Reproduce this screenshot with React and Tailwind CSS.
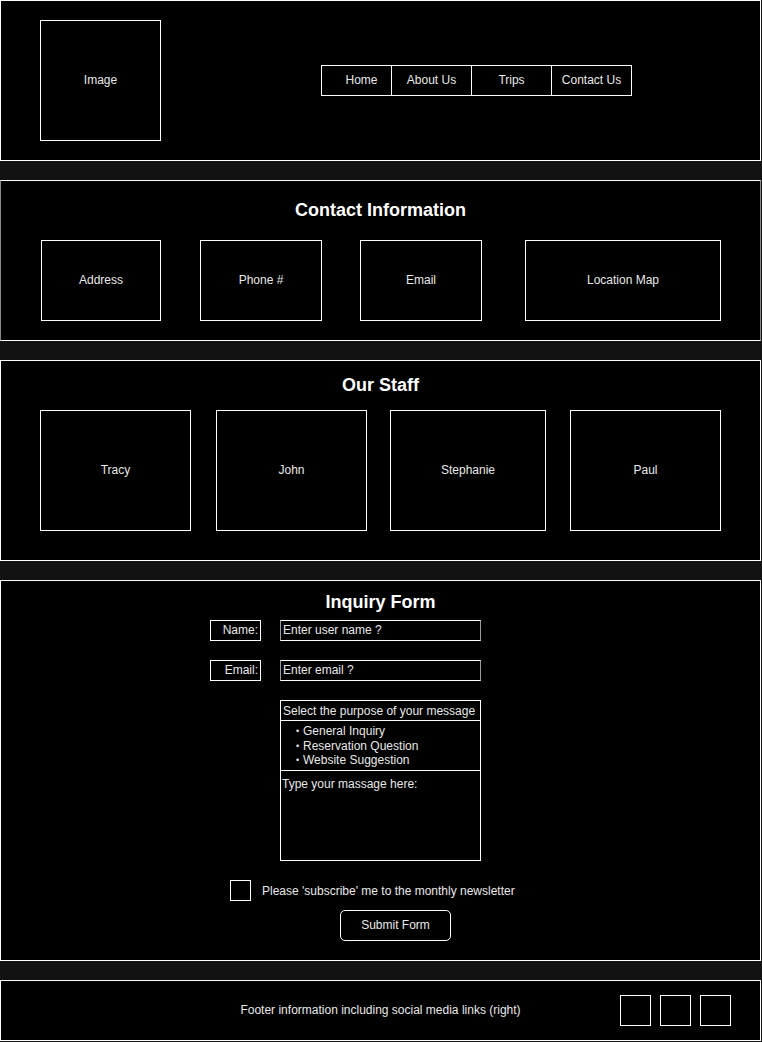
import React from 'react';

const font = { fontFamily: '"Liberation Sans", Arial, sans-serif' };

const Box = ({ className = '', children }) => (
  <div className={`border border-white flex items-center justify-center pb-[1px] text-[12px] text-[#e8e8e8] shrink-0 ${className}`}>
    {children}
  </div>
);

const App = () => {
  const navItems = [
    { label: 'Home', cls: 'w-[69px] pl-[10px]' },
    { label: 'About Us', cls: 'w-[80px] border-l border-white' },
    { label: 'Trips', cls: 'w-[80px] border-l border-white' },
    { label: 'Contact Us', cls: 'w-[80px] border-l border-white' },
  ];

  return (
    <div className="min-h-screen bg-[#121212] flex flex-col gap-[19px] text-white" style={font}>
      {/* Header */}
      <header className="w-[761px] h-[161px] border border-white bg-black flex items-center pl-[39px]">
        <Box className="w-[121px] h-[121px]">Image</Box>
        <nav className="ml-[160px] flex h-[31px] border border-white">
          {navItems.map((n) => (
            <div key={n.label} className={`flex items-center justify-center pb-[1px] text-[12px] text-[#e8e8e8] ${n.cls}`}>
              {n.label}
            </div>
          ))}
        </nav>
      </header>

      {/* Contact Information */}
      <section className="w-[761px] h-[161px] border border-white border-x-[#8a8a8a] bg-black pt-[17px]">
        <h2 className="text-center text-[18px] leading-[24px] font-bold">Contact Information</h2>
        <div className="flex mt-[18px]">
          <Box className="ml-[40px] w-[120px] h-[81px]">Address</Box>
          <Box className="ml-[39px] w-[122px] h-[81px]">Phone #</Box>
          <Box className="ml-[38px] w-[122px] h-[81px]">Email</Box>
          <Box className="ml-[43px] w-[196px] h-[81px]">Location Map</Box>
        </div>
      </section>

      {/* Our Staff */}
      <section className="w-[761px] h-[201px] border border-white bg-black pt-[12px]">
        <h2 className="text-center text-[18px] leading-[24px] font-bold">Our Staff</h2>
        <div className="flex mt-[13px]">
          <Box className="ml-[39px] w-[151px] h-[121px]">Tracy</Box>
          <Box className="ml-[25px] w-[151px] h-[121px]">John</Box>
          <Box className="ml-[23px] w-[156px] h-[121px]">Stephanie</Box>
          <Box className="ml-[24px] w-[151px] h-[121px]">Paul</Box>
        </div>
      </section>

      {/* Inquiry Form */}
      <section className="w-[761px] h-[381px] border border-white bg-black pt-[9px] text-[12px] text-[#e8e8e8]">
        <h2 className="text-center text-[18px] leading-[24px] font-bold text-white">Inquiry Form</h2>

        <div className="flex mt-[6px] ml-[209px]">
          <div className="w-[51px] h-[21px] border border-white flex items-center justify-end pr-[2px] pb-[1px]">Name:</div>
          <div className="ml-[19px] w-[201px] h-[21px] border border-white border-x-[#9a9a9a] flex items-center pl-[2px] pb-[1px]">Enter user name ?</div>
        </div>

        <div className="flex mt-[19px] ml-[209px]">
          <div className="w-[51px] h-[21px] border border-white flex items-center justify-end pr-[2px] pb-[1px]">Email:</div>
          <div className="ml-[19px] w-[201px] h-[21px] border border-white border-x-[#9a9a9a] flex items-center pl-[2px] pb-[1px]">Enter email ?</div>
        </div>

        <div className="mt-[19px] ml-[279px] w-[201px] border border-white">
          <div className="h-[20px] border-b border-white flex items-center pl-[2px]">Select the purpose of your message</div>
          <ul className="h-[50px] border-b border-white pt-[3px] pl-[15px] text-[12px] leading-[14.5px]">
            {['General Inquiry', 'Reservation Question', 'Website Suggestion'].map((item) => (
              <li key={item} className="flex items-center">
                <span className="w-[7px] text-[9px]">•</span>
                {item}
              </li>
            ))}
          </ul>
          <div className="h-[89px] pl-[1px] pt-[6px] leading-[14px]">Type your massage here:</div>
        </div>

        <div className="flex items-center mt-[19px] ml-[229px]">
          <div className="w-[21px] h-[21px] border border-white" />
          <span className="ml-[11px]">Please 'subscribe' me to the monthly newsletter</span>
        </div>

        <button className="mt-[9px] ml-[339px] w-[111px] h-[31px] border border-white rounded-[5px] bg-black pb-[1px] text-[12px] text-[#e8e8e8] flex items-center justify-center">
          Submit Form
        </button>
      </section>

      {/* Footer */}
      <footer className="w-[761px] h-[61px] border border-white bg-black grid grid-cols-[1fr_auto_1fr] items-center">
        <div />
        <p className="text-[12px] text-[#e8e8e8] pb-[1px]">Footer information including social media links (right)</p>
        <div className="flex justify-end gap-[9px] pr-[29px]">
          <div className="w-[31px] h-[31px] border border-white" />
          <div className="w-[31px] h-[31px] border border-white" />
          <div className="w-[31px] h-[31px] border border-white" />
        </div>
      </footer>
    </div>
  );
};

export default App;
